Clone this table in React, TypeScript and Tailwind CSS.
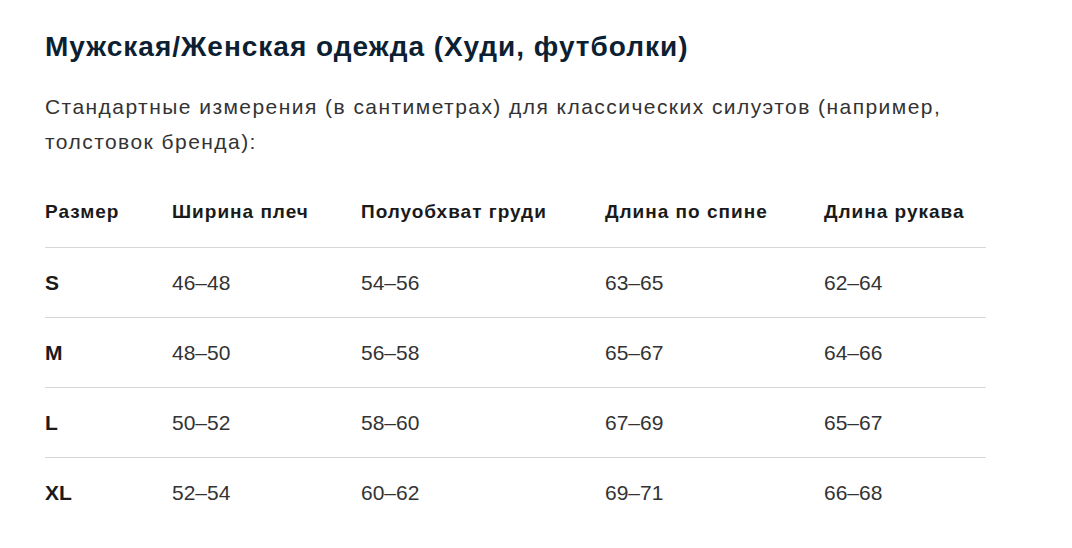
import React from "react";

const rows = [
  { size: "S", shoulders: "46–48", chest: "54–56", back: "63–65", sleeve: "62–64" },
  { size: "M", shoulders: "48–50", chest: "56–58", back: "65–67", sleeve: "64–66" },
  { size: "L", shoulders: "50–52", chest: "58–60", back: "67–69", sleeve: "65–67" },
  { size: "XL", shoulders: "52–54", chest: "60–62", back: "69–71", sleeve: "66–68" },
];

const cols = "grid grid-cols-[127px_189px_244px_219px_162px]";

const App = () => {
  return (
    <div className="bg-white min-h-[548px] font-['Liberation_Sans',Arial,sans-serif]">
      <div className="pl-[45px] pt-[29px] w-[986px]">
        <h2 className="text-[28px] leading-[36px] tracking-[1px] font-bold text-[#0d1f33]">
          Мужская/Женская одежда (Худи, футболки)
        </h2>
        <p className="mt-[24px] text-[21px] leading-[35px] tracking-[1.45px] text-[#333333]">
          Стандартные измерения (в сантиметрах) для классических силуэтов (например,
          толстовок бренда):
        </p>
        <div className="mt-[18px] text-[21px] text-[#333333]">
          <div className={`${cols} h-[70px] items-center text-[19px] tracking-[1px] font-bold text-[#1a1a1a]`}>
            <div>Размер</div>
            <div>Ширина плеч</div>
            <div>Полуобхват груди</div>
            <div>Длина по спине</div>
            <div>Длина рукава</div>
          </div>
          {rows.map((r) => (
            <div key={r.size} className={`${cols} h-[70px] items-center border-t border-[#d6d6d6]`}>
              <div className="font-bold text-[#1a1a1a]">{r.size}</div>
              <div>{r.shoulders}</div>
              <div>{r.chest}</div>
              <div>{r.back}</div>
              <div>{r.sleeve}</div>
            </div>
          ))}
        </div>
      </div>
    </div>
  );
};

export default App;
